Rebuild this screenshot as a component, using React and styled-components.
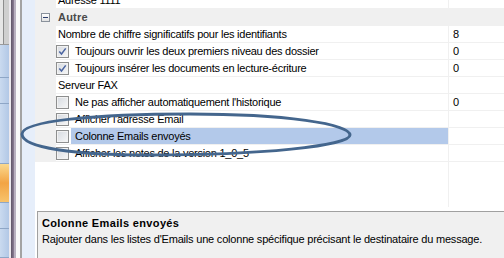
import React from 'react'
import styled, { createGlobalStyle } from 'styled-components'

const GlobalStyle = createGlobalStyle`
  html, body {
    margin: 0;
    padding: 0;
    background: #fff;
  }
`

const Screen = styled.div`
  position: relative;
  display: flex;
  width: 504px;
  height: 258px;
  overflow: hidden;
  font-family: "Liberation Sans", Arial, sans-serif;
  font-size: 11px;
  letter-spacing: -0.25px;
  color: #000;
`

// left navigation bar, only a sliver of it is visible
const NavStrip = styled.div`
  display: flex;
  flex-direction: column;
  width: 9px;
  flex: none;
`

const NavTop = styled.div`
  height: 44px;
  flex: none;
  background: linear-gradient(90deg, #e6e6e6 0 3px, #8d8d8d 3px 4px, #cfcfcf 4px);
  border-bottom: 1px solid #9a9a9a;
`

const NavItem = styled.div`
  height: ${p => p.$h}px;
  flex: ${p => (p.$fill ? 1 : 'none')};
  border-bottom: 1px solid #8ea6c6;
  background: ${p =>
    p.$active
      ? 'linear-gradient(#fbd98e, #f2a444 50%, #f7c36c)'
      : 'linear-gradient(90deg, #cadaef, #b2c8e6)'};
`

const Strip = styled.div`
  width: ${p => p.$w}px;
  flex: none;
  background: ${p => p.$bg};
`

const Main = styled.div`
  flex: 1;
  min-width: 0;
  display: flex;
  flex-direction: column;
  background: #fff;
`

const GridBody = styled.div`
  height: 207px;
  flex: none;
  overflow: hidden;
  background: linear-gradient(#f0f0f0, #f0f0f0) 413px 0 / 1px 100% no-repeat, #fff;
`

const Rows = styled.div`
  margin-top: -8px;
`

const Row = styled.div`
  display: flex;
  height: 16px;
  border-bottom: 1px solid #f0f0f0;
  background: ${p => (p.$category ? '#f0f0f0' : '#fff')};
`

const Gutter = styled.div`
  width: 21px;
  flex: none;
  box-sizing: border-box;
  padding-left: 6px;
  display: flex;
  align-items: center;
  background: #f0f0f0;
`

const Toggle = styled.span`
  width: 9px;
  height: 9px;
  box-sizing: border-box;
  border: 1px solid #8a929c;
  background: linear-gradient(#fff, #e2e2e2);
  display: flex;
  align-items: center;
  justify-content: center;

  &::after {
    content: '';
    width: 5px;
    height: 1px;
    background: #2e3f6e;
  }
`

const Name = styled.div`
  flex: 1;
  min-width: 0;
  display: flex;
  align-items: center;
`

const NameText = styled.span`
  flex: 1;
  align-self: stretch;
  line-height: 16px;
  padding-left: ${p => (p.$indent ? 4 : 2)}px;
  white-space: nowrap;
  overflow: hidden;
  background: ${p => (p.$selected ? '#b3c9ea' : 'transparent')};
  font-weight: ${p => (p.$bold ? 'bold' : 'normal')};
  color: ${p => (p.$bold ? '#4a4a4a' : '#000')};
  letter-spacing: ${p => (p.$bold ? '0.2px' : '-0.25px')};
`

const Check = styled.span`
  width: 13px;
  height: 13px;
  flex: none;
  box-sizing: border-box;
  margin-right: 2px;
  border: 1px solid #8e8f8f;
  background: linear-gradient(135deg, #d6dae0, #f7f7f7);
  box-shadow: inset 0 0 0 1px #f2f2f2;
  display: flex;
  align-items: center;
  justify-content: center;
`

const Value = styled.div`
  width: 56px;
  flex: none;
  box-sizing: border-box;
  border-left: 1px solid #f0f0f0;
  padding-left: 4px;
  line-height: 16px;
`

const Help = styled.div`
  flex: 1;
  margin: 4px 0 0 2px;
  padding: 4px 0 0 4px;
  border-top: 1px solid #a0a0a0;
  border-left: 1px solid #a0a0a0;
  background: #f0f0f0;
`

const HelpTitle = styled.div`
  font-weight: bold;
  line-height: 14px;
  letter-spacing: 0.35px;
`

const HelpText = styled.div`
  line-height: 15px;
  margin-top: 2px;
  letter-spacing: -0.2px;
`

const Overlay = styled.svg`
  position: absolute;
  left: 0;
  top: 0;
  pointer-events: none;
`

const rows = [
  { name: 'Adresse 1111' },
  { category: 'Autre' },
  { name: 'Nombre de chiffre significatifs pour les identifiants', value: '8' },
  { name: 'Toujours ouvrir les deux premiers niveau des dossier', check: true, checked: true, value: '0' },
  { name: 'Toujours insérer les documents en lecture-écriture', check: true, checked: true, value: '0' },
  { name: 'Serveur FAX' },
  { name: "Ne pas afficher automatiquement l'historique", check: true, value: '0' },
  { name: "Afficher l'adresse Email", check: true },
  { name: 'Colonne Emails envoyés', check: true, selected: true },
  { name: 'Afficher les notes de la version 1_0_5', check: true },
]

const CheckMark = () => (
  <svg width="9" height="9" viewBox="0 0 9 9">
    <path d="M1.3 4.6 L3.5 7 L7.7 1.4" fill="none" stroke="#4a64a0" strokeWidth="1.5" />
  </svg>
)

const PropertyRow = ({ row }) => {
  if (row.category) {
    return (
      <Row $category>
        <Gutter>
          <Toggle />
        </Gutter>
        <Name>
          <NameText $bold>{row.category}</NameText>
        </Name>
      </Row>
    )
  }
  return (
    <Row>
      <Gutter />
      <Name>
        {row.check && <Check>{row.checked && <CheckMark />}</Check>}
        <NameText $indent={row.check} $selected={row.selected}>
          {row.name}
        </NameText>
      </Name>
      <Value>{row.value}</Value>
    </Row>
  )
}

const App = () => {
  return (
    <Screen>
      <GlobalStyle />
      <NavStrip>
        <NavTop />
        <NavItem $h={32} />
        <NavItem $h={25} />
        <NavItem $h={59} />
        <NavItem $h={38} $active />
        <NavItem $h={25} />
        <NavItem $fill />
      </NavStrip>
      <Strip $w={2} $bg="#ece9ee" />
      <Strip $w={3} $bg="linear-gradient(90deg, #5e5466, #8d7f96)" />
      <Strip $w={2} $bg="#b9b1c0" />
      <Strip $w={4} $bg="#f9f9f9" />
      <Strip $w={2} $bg="#a3a3a3" />
      <Strip $w={13} $bg="#e6eefa" />
      <Main>
        <GridBody>
          <Rows>
            {rows.map((row, i) => (
              <PropertyRow key={i} row={row} />
            ))}
          </Rows>
        </GridBody>
        <Help>
          <HelpTitle>Colonne Emails envoyés</HelpTitle>
          <HelpText>
            Rajouter dans les listes d'Emails une colonne spécifique précisant le destinataire du message.
          </HelpText>
        </Help>
      </Main>
      <Overlay width="504" height="258" viewBox="0 0 504 258">
        <path
          d="M22 134 C22 121 95 114 190 114 C285 114 350 124 350 135 C350 146 260 155 150 155 C75 155 22 148 22 134 Z"
          fill="none"
          stroke="#44668d"
          strokeWidth="3"
        />
      </Overlay>
    </Screen>
  )
}

export default App
